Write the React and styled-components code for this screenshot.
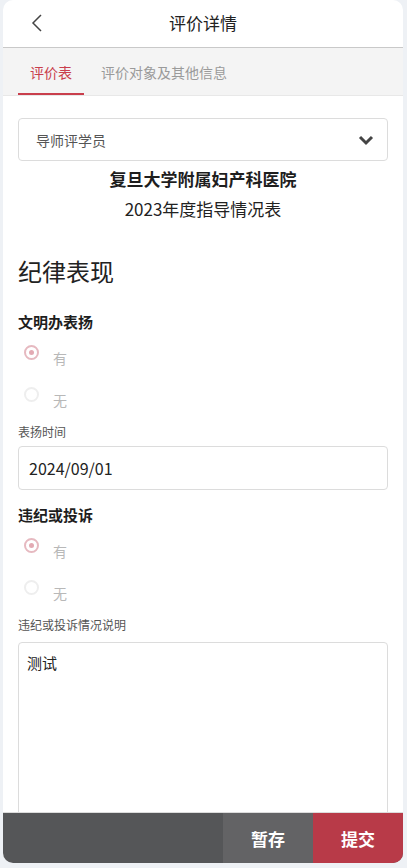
import styled, { createGlobalStyle } from "styled-components";

const GlobalStyle = createGlobalStyle`
  html, body {
    margin: 0;
    padding: 0;
    background-color: #eef1f5;
  }
  body {
    font-family: "Noto Sans CJK SC", "Noto Sans", sans-serif;
  }
  * {
    box-sizing: border-box;
  }
`;

const StyledCard = styled.div`
  margin: 0 4px 0 3px;
  height: 863px;
  background-color: #fff;
  border-radius: 10px;
  overflow: hidden;
  display: flex;
  flex-direction: column;
`;

const StyledHeader = styled.div`
  height: 48px;
  flex-shrink: 0;
  display: flex;
  align-items: center;
  justify-content: center;
  position: relative;
  border-bottom: 1px solid #c9c9c9;
`;

const StyledBack = styled.div`
  position: absolute;
  left: 24px;
  top: 13px;
  width: 20px;
  height: 20px;
  display: flex;
  align-items: center;
  justify-content: center;
`;

const StyledTitle = styled.div`
  font-size: 17px;
  color: #222;
  line-height: 24px;
  margin-top: -2px;
`;

const StyledTabs = styled.div`
  height: 48px;
  flex-shrink: 0;
  background-color: #f4f4f4;
  border-bottom: 1px solid #e8e8e8;
  display: flex;
  padding-left: 15px;
  gap: 17px;
`;

const StyledTab = styled.div`
  height: 100%;
  display: flex;
  align-items: center;
  padding: 2px 12px 0 12px;
  font-size: 14px;
  color: ${(props) => (props.active ? "#c93e4c" : "#9a9a9a")};
  border-bottom: 2px solid ${(props) => (props.active ? "#c93e4c" : "transparent")};

  &:nth-child(2) {
    padding: 2px 0 0 0;
  }
`;

const StyledBody = styled.div`
  flex: 1;
  overflow: hidden;
  padding: 22px 15px 0 15px;
`;

const StyledSelect = styled.div`
  height: 43px;
  border: 1px solid #dcdcdc;
  border-radius: 4px;
  display: flex;
  align-items: center;
  justify-content: space-between;
  padding: 0 13px 0 17px;
  font-size: 14px;
  color: #555;
`;

const StyledOrgName = styled.div`
  margin-top: 6px;
  text-align: center;
  font-size: 17px;
  font-weight: 700;
  line-height: 24px;
  color: #1e1e1e;
`;

const StyledSubTitle = styled.div`
  margin-top: 6px;
  text-align: center;
  font-size: 17px;
  line-height: 24px;
  color: #222;
`;

const StyledSection = styled.div`
  margin-top: 33px;
  font-size: 24px;
  line-height: 34px;
  color: #222;
`;

const StyledQuestion = styled.div`
  margin-top: ${(props) => props.gap || 23}px;
  font-size: 15px;
  font-weight: 700;
  line-height: 22px;
  color: #1e1e1e;
`;

const StyledRadioRow = styled.div`
  height: 42px;
  display: flex;
  align-items: flex-start;
  padding-left: 6px;
`;

const StyledRadio = styled.span`
  width: 15px;
  height: 15px;
  margin-top: 12px;
  border-radius: 50%;
  border: 2px solid ${(props) => (props.checked ? "#e6b9c0" : "#eeeeee")};
  display: flex;
  align-items: center;
  justify-content: center;

  &::after {
    content: "";
    display: ${(props) => (props.checked ? "block" : "none")};
    width: 5px;
    height: 5px;
    border-radius: 50%;
    background-color: #e3aab3;
  }
`;

const StyledRadioLabel = styled.span`
  margin-top: 15px;
  margin-left: 14px;
  font-size: 14px;
  line-height: 20px;
  color: #b8b8b8;
`;

const StyledLabel = styled.div`
  margin-top: 6px;
  font-size: 12px;
  line-height: 18px;
  color: #555;
`;

const StyledInput = styled.div`
  margin-top: ${(props) => props.gap}px;
  height: 44px;
  border: 1px solid #dcdcdc;
  border-radius: 4px;
  display: flex;
  align-items: center;
  padding-left: 10px;
  font-size: 16px;
  color: #222;
`;

const StyledTextArea = styled.div`
  margin-top: 8px;
  height: 220px;
  border: 1px solid #dcdcdc;
  border-radius: 4px;
  padding: 9px 8px;
  font-size: 15px;
  line-height: 22px;
  color: #222;
`;

const StyledFooter = styled.div`
  height: 51px;
  flex-shrink: 0;
  display: flex;
  background-color: #555658;
  border-top: 1px solid #dcdcdc;
`;

const StyledFooterSpace = styled.div`
  flex: 1;
`;

const StyledFooterBtn = styled.div`
  width: 90px;
  display: flex;
  align-items: center;
  justify-content: center;
  font-size: 17px;
  font-weight: 700;
  color: #fff;
  background-color: ${(props) => props.bg};
`;

const Radio = ({ label, checked }) => (
  <StyledRadioRow>
    <StyledRadio checked={checked} />
    <StyledRadioLabel>{label}</StyledRadioLabel>
  </StyledRadioRow>
);

const App = () => {
  return (
    <>
      <GlobalStyle />
      <StyledCard>
        <StyledHeader>
          <StyledBack>
            <svg width="12" height="18" viewBox="0 0 12 18">
              <polyline points="10,1 2,9 10,17" fill="none" stroke="#444" strokeWidth="1.5" />
            </svg>
          </StyledBack>
          <StyledTitle>评价详情</StyledTitle>
        </StyledHeader>
        <StyledTabs>
          <StyledTab active>评价表</StyledTab>
          <StyledTab>评价对象及其他信息</StyledTab>
        </StyledTabs>
        <StyledBody>
          <StyledSelect>
            导师评学员
            <svg width="16" height="12" viewBox="0 0 16 12">
              <polyline points="2,3 8,9 14,3" fill="none" stroke="#444" strokeWidth="3" />
            </svg>
          </StyledSelect>
          <StyledOrgName>复旦大学附属妇产科医院</StyledOrgName>
          <StyledSubTitle>2023年度指导情况表</StyledSubTitle>
          <StyledSection>纪律表现</StyledSection>
          <StyledQuestion>文明办表扬</StyledQuestion>
          <Radio label="有" checked />
          <Radio label="无" />
          <StyledLabel>表扬时间</StyledLabel>
          <StyledInput gap={5}>2024/09/01</StyledInput>
          <StyledQuestion gap={14}>违纪或投诉</StyledQuestion>
          <Radio label="有" checked />
          <Radio label="无" />
          <StyledLabel>违纪或投诉情况说明</StyledLabel>
          <StyledTextArea>测试</StyledTextArea>
        </StyledBody>
        <StyledFooter>
          <StyledFooterSpace />
          <StyledFooterBtn bg="#636365">暂存</StyledFooterBtn>
          <StyledFooterBtn bg="#b83a48">提交</StyledFooterBtn>
        </StyledFooter>
      </StyledCard>
    </>
  );
};

export default App;
